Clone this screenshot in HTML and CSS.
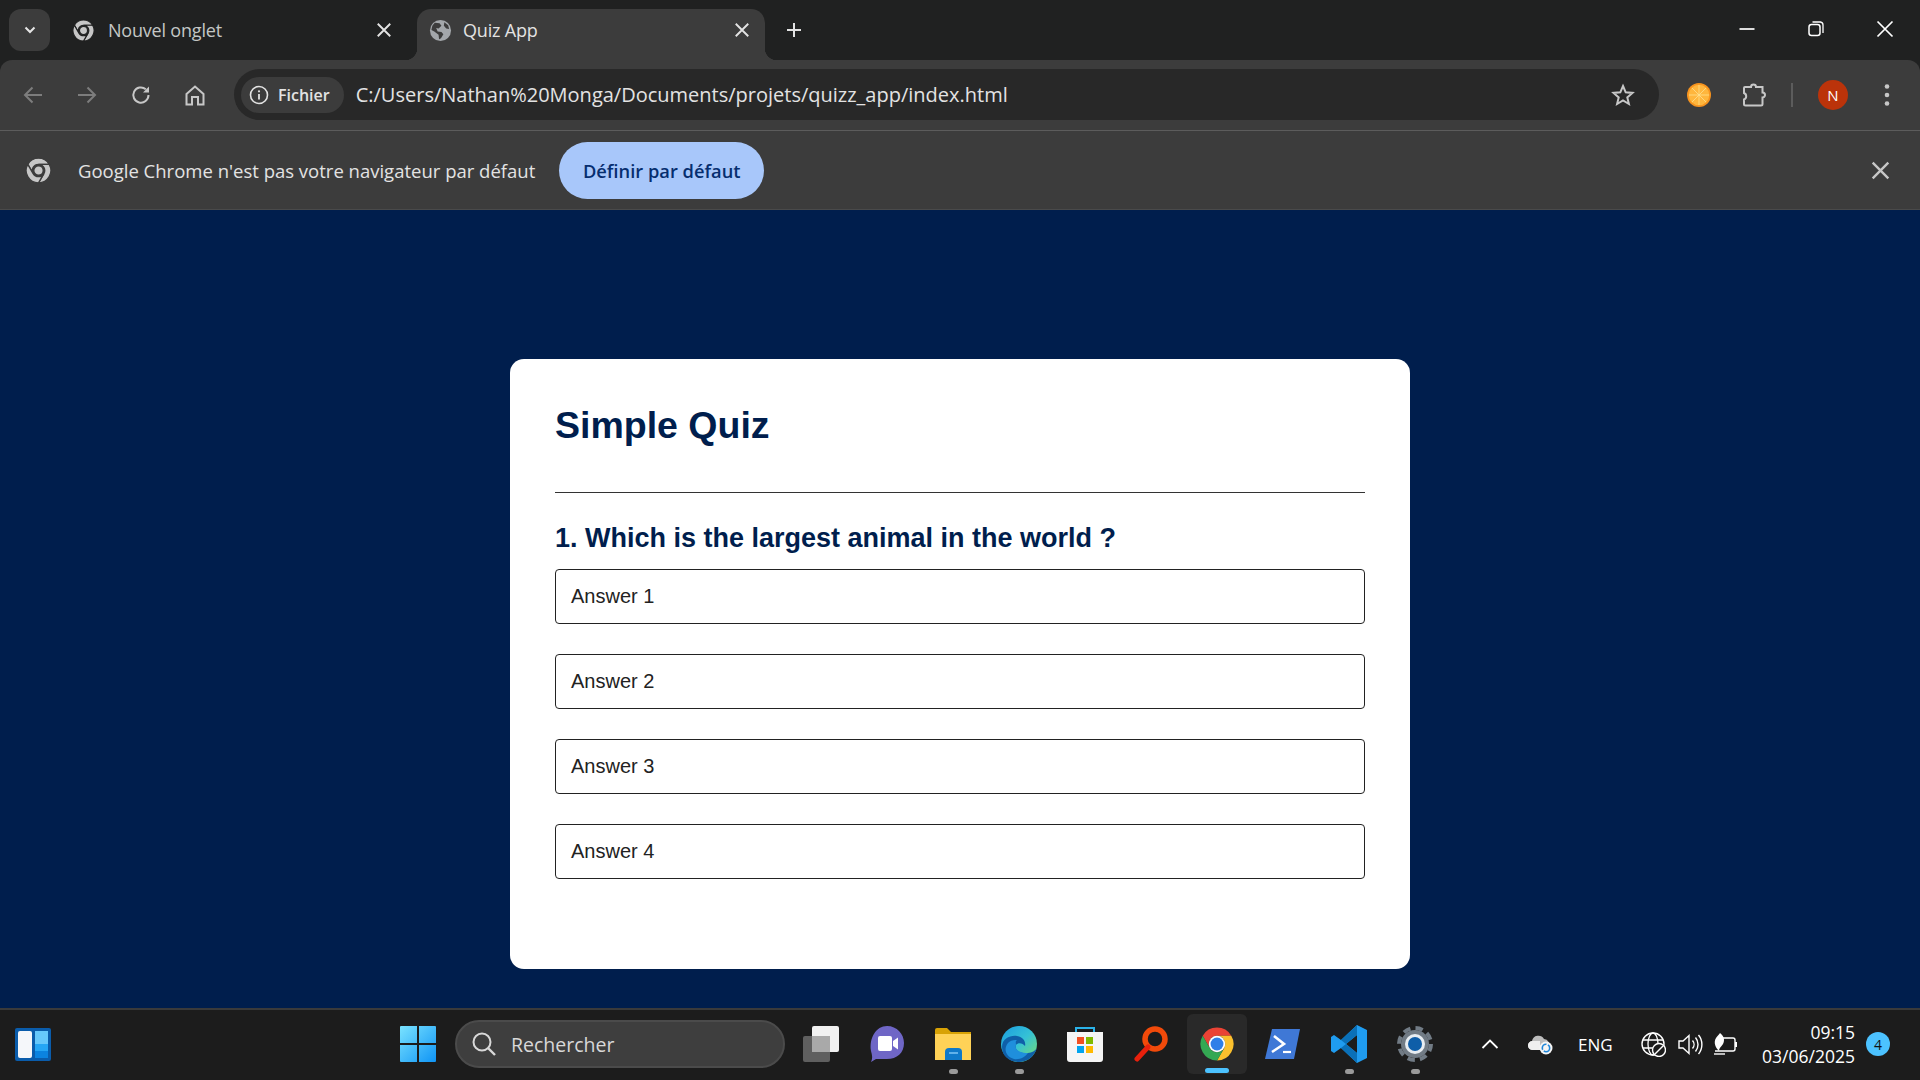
FILE: index.html
```html
<!DOCTYPE html>
<html lang="en">
<head>
  <meta charset="UTF-8">
  <title>Quiz App</title>
  <link rel="stylesheet" href="styles.css">
</head>
<body>
  <svg class="defs" width="0" height="0">
    <symbol id="chrome-grey" viewBox="0 0 24 24">
      <path d="M12 1A11 11 0 0 1 21.53 6.5H12A5.5 5.5 0 0 0 7.24 14.75L2.47 6.5A11 11 0 0 1 12 1Z"/>
      <path d="M21.53 6.5A11 11 0 0 1 12 23L16.76 14.75A5.5 5.5 0 0 0 12 6.5Z"/>
      <path d="M2.47 6.5A11 11 0 0 0 12 23L16.76 14.75A5.5 5.5 0 0 1 7.24 14.75Z"/>
      <circle cx="12" cy="12" r="4.2"/>
    </symbol>
    <symbol id="x-mark" viewBox="0 0 16 16">
      <path d="M3 3L13 13M13 3L3 13" fill="none" stroke="currentColor" stroke-width="1.5"/>
    </symbol>
  </svg>

  <div class="tabstrip">
    <button class="tab-list">
      <svg width="14" height="14" viewBox="0 0 14 14"><path d="M2.5 4.5L7 9L11.5 4.5" fill="none" stroke="#e6e6e6" stroke-width="2"/></svg>
    </button>
    <div class="tab">
      <svg class="tab-icon grey-logo on-dark"><use href="#chrome-grey"/></svg>
      <span class="tab-title">Nouvel onglet</span>
      <svg class="tab-close"><use href="#x-mark"/></svg>
    </div>
    <div class="tab tab-active">
      <svg class="tab-icon" viewBox="0 0 24 24">
        <circle cx="12" cy="12" r="11" fill="#a3a7ab"/>
        <path d="M6 4L11 4.5L13 7L10 10L7.5 9.5L9 13L13 13.5L15 16L12.5 20L10.500 21L10 16.500L5.500 13L2.500 11.500L3.500 7ZM16 3.500L20 6.500L21 10.500L18 10L15.500 7Z" fill="#3c3c3c"/>
      </svg>
      <span class="tab-title">Quiz App</span>
      <svg class="tab-close"><use href="#x-mark"/></svg>
    </div>
    <svg class="new-tab" width="18" height="18" viewBox="0 0 18 18"><path d="M9 2V16M2 9H16" stroke="#e3e3e3" stroke-width="2"/></svg>
    <div class="window-controls">
      <svg width="18" height="18" viewBox="0 0 18 18"><path d="M1.500 9H16.500" stroke="#fff" stroke-width="1.700"/></svg>
      <svg width="18" height="18" viewBox="0 0 18 18"><rect x="2" y="4.500" width="11" height="11" rx="2.500" fill="none" stroke="#fff" stroke-width="1.500"/><path d="M5.500 2H13.500A3 3 0 0 1 16 5V13" fill="none" stroke="#fff" stroke-width="1.300"/></svg>
      <svg width="18" height="18" viewBox="0 0 18 18"><path d="M1.500 1.500L16.500 16.500M16.500 1.500L1.500 16.500" stroke="#fff" stroke-width="1.700"/></svg>
    </div>
  </div>

  <div class="toolbar">
    <div class="nav-btn">
      <svg width="22" height="22" viewBox="0 0 22 22"><path d="M20 11H3M10.500 3.500L3 11L10.500 18.500" fill="none" stroke="#7d7d7d" stroke-width="2"/></svg>
    </div>
    <div class="nav-btn">
      <svg width="22" height="22" viewBox="0 0 22 22"><path d="M2 11H19M11.500 3.500L19 11L11.500 18.500" fill="none" stroke="#7d7d7d" stroke-width="2"/></svg>
    </div>
    <div class="nav-btn">
      <svg width="22" height="22" viewBox="0 0 22 22"><path d="M18.500 11A7.600 7.600 0 1 1 15.800 5.200" fill="none" stroke="#c7c7c7" stroke-width="2"/><path d="M19 2.500V8.500H13Z" fill="#c7c7c7"/></svg>
    </div>
    <div class="nav-btn">
      <svg width="22" height="22" viewBox="0 0 22 22"><path d="M2.500 10L11 2.500L19.500 10V20.500H14V13H8V20.500H2.500Z" fill="none" stroke="#c7c7c7" stroke-width="2"/></svg>
    </div>
    <div class="omnibox">
      <div class="site-chip">
        <svg width="20" height="20" viewBox="0 0 20 20"><circle cx="10" cy="10" r="8.500" fill="none" stroke="#e3e3e3" stroke-width="1.600"/><path d="M10 9V14.500" stroke="#e3e3e3" stroke-width="1.800"/><circle cx="10" cy="6.300" r="1.100" fill="#e3e3e3"/></svg>
        <span>Fichier</span>
      </div>
      <span class="url">C:/Users/Nathan%20Monga/Documents/projets/quizz_app/index.html</span>
      <svg class="star" width="24" height="24" viewBox="0 0 24 24"><path d="M12 3L14.700 9.300L21.500 9.900L16.300 14.400L17.900 21L12 17.500L6.100 21L7.700 14.400L2.500 9.900L9.300 9.300Z" fill="none" stroke="#c7c7c7" stroke-width="2"/></svg>
    </div>
    <div class="toolbar-end">
      <svg class="orange" width="24" height="24" viewBox="0 0 24 24">
        <circle cx="12" cy="12" r="12" fill="#f7931e"/>
        <circle cx="12" cy="12" r="10.300" fill="#ffb63d"/>
        <path d="M12 2V22M2 12H22M5 5L19 19M19 5L5 19" stroke="#ffdf8e" stroke-width=".8"/>
      </svg>
      <svg class="puzzle" width="24" height="26" viewBox="0 0 24 26"><path d="M3 5H9A2.500 2.500 0 0 1 14 5H20.500V10.500A2.500 2.500 0 0 1 20.500 15.500V22A1.500 1.500 0 0 1 19 23.500H3.500A1.500 1.500 0 0 1 2 22V17.500A3.500 3.500 0 0 0 2 11V6A1 1 0 0 1 3 5Z" fill="none" stroke="#c7c7c7" stroke-width="2"/></svg>
      <span class="toolbar-sep"></span>
      <span class="avatar">N</span>
      <svg class="kebab" width="6" height="24" viewBox="0 0 6 24"><circle cx="3" cy="3.500" r="2.300"/><circle cx="3" cy="12" r="2.300"/><circle cx="3" cy="20.500" r="2.300"/></svg>
    </div>
  </div>

  <div class="infobar">
    <svg class="infobar-logo grey-logo on-panel"><use href="#chrome-grey"/></svg>
    <span class="infobar-text">Google Chrome n'est pas votre navigateur par défaut</span>
    <button class="infobar-btn">Définir par défaut</button>
    <svg class="infobar-close"><use href="#x-mark"/></svg>
  </div>

  <main class="page">
    <div class="app">
      <h1>Simple Quiz</h1>
      <div class="quiz">
        <h2>1. Which is the largest animal in the world ?</h2>
        <div class="answers">
          <button class="btn">Answer 1</button>
          <button class="btn">Answer 2</button>
          <button class="btn">Answer 3</button>
          <button class="btn">Answer 4</button>
        </div>
      </div>
    </div>
  </main>

  <footer class="taskbar">
    <svg class="widgets" width="36" height="33" viewBox="0 0 36 33">
      <rect width="36" height="33" rx="2" fill="#0a5cab"/>
      <rect x="3" y="3" width="14" height="27" rx="2" fill="#f5f7fa"/>
      <rect x="20" y="3" width="13" height="13" fill="#66c8fb"/>
      <rect x="20" y="16" width="13" height="7" fill="#25a6f5"/>
      <rect x="20" y="23" width="13" height="7" fill="#0b83e0"/>
    </svg>
    <svg class="start" width="36" height="36" viewBox="0 0 36 36">
      <defs>
        <linearGradient id="win" x1="0" y1="0" x2="1" y2="1"><stop offset="0" stop-color="#7ae3ff"/><stop offset="1" stop-color="#0f94f5"/></linearGradient>
      </defs>
      <path d="M1 0H17V17H0V1A1 1 0 0 1 1 0ZM19 0H35A1 1 0 0 1 36 1V17H19ZM0 19H17V36H1A1 1 0 0 1 0 35ZM19 19H36V35A1 1 0 0 1 35 36H19Z" fill="url(#win)"/>
    </svg>
    <div class="search">
      <svg width="26" height="26" viewBox="0 0 26 26"><circle cx="11" cy="11" r="8.500" fill="none" stroke="#d8d8d8" stroke-width="2"/><path d="M17 17L24 24" stroke="#d8d8d8" stroke-width="2.400"/></svg>
      <span>Rechercher</span>
    </div>
    <div class="task-icons">
      <div class="task-item">
        <svg width="36" height="36" viewBox="0 0 36 36"><rect y="10" width="27" height="26" rx="2" fill="#5f5f5f"/><rect x="9" y="0" width="27" height="26" rx="2" fill="#f1f1f1"/><rect x="9" y="10" width="18" height="16" fill="#a9a9a9"/></svg>
      </div>
      <div class="task-item">
        <svg width="36" height="36" viewBox="0 0 36 36"><path d="M18 0C28 0 35 8 35 17C35 27 28 33 18 33H7L2 36C4 32 3 29 2 25C0 12 7 0 18 0Z" fill="#6f66c6"/><rect x="9" y="10" width="14" height="15" rx="2" fill="#fff"/><path d="M24 15L29 11.500V23.500L24 20Z" fill="#fff"/></svg>
      </div>
      <div class="task-item has-dot">
        <svg width="36" height="36" viewBox="0 0 36 36"><path d="M0 4A2 2 0 0 1 2 2H12L16 6H36V34H0Z" fill="#d8a205"/><path d="M0 8H36V34H0Z" fill="#ffd257"/><path d="M10 34V26A4 4 0 0 1 14 22H23A4 4 0 0 1 27 26V34Z" fill="#0f79c9"/><path d="M14 27H23" stroke="#7cc4f4" stroke-width="1.500"/></svg>
      </div>
      <div class="task-item has-dot">
        <svg width="36" height="36" viewBox="0 0 36 36">
          <defs><linearGradient id="edge" x1="0" y1="0" x2="1" y2="1"><stop offset="0" stop-color="#1a9ce0"/><stop offset=".5" stop-color="#35c1d6"/><stop offset="1" stop-color="#7be06a"/></linearGradient></defs>
          <circle cx="18" cy="18" r="18" fill="url(#edge)"/>
          <path d="M1 21C1 12 10 9 16 10C23 11 25 17 24 20C22 17 17 16 15 19C13 23 18 28 27 27C31 26.500 34 25 36 22C33 31 26 36 18 36C8 36 1 30 1 21Z" fill="#0f5fa8"/>
          <path d="M15 19C13 23 18 27 27 27C24 31 19 34 13 33C5 31 2 23 7 17C9 14.500 13 13.500 16 14C14 15.500 15 17 15 19Z" fill="#1f8fdc"/>
        </svg>
      </div>
      <div class="task-item">
        <svg width="36" height="36" viewBox="0 0 36 36"><path d="M9 7V2H27V7" fill="none" stroke="#2ab2e8" stroke-width="2"/><path d="M0 6H36V33A3 3 0 0 1 33 36H3A3 3 0 0 1 0 33Z" fill="#f5f5f5"/><rect x="10" y="11" width="7" height="7" fill="#f25022"/><rect x="19" y="11" width="7" height="7" fill="#7fba00"/><rect x="10" y="20" width="7" height="7" fill="#00a4ef"/><rect x="19" y="20" width="7" height="7" fill="#ffb900"/></svg>
      </div>
      <div class="task-item">
        <svg width="36" height="36" viewBox="0 0 36 36"><circle cx="22" cy="13" r="10" fill="none" stroke="#f24a0a" stroke-width="5.500"/><path d="M15 21L4 33" stroke="#e8200c" stroke-width="5" stroke-linecap="round"/></svg>
      </div>
      <div class="task-item task-active">
        <svg width="36" height="36" viewBox="0 0 24 24">
          <path d="M12 1A11 11 0 0 1 21.530 6.500H12A5.500 5.500 0 0 0 7.240 14.750L2.470 6.500A11 11 0 0 1 12 1Z" fill="#ea4335"/>
          <path d="M21.530 6.500A11 11 0 0 1 12 23L16.760 14.750A5.500 5.500 0 0 0 12 6.500Z" fill="#fbc02d"/>
          <path d="M2.470 6.500A11 11 0 0 0 12 23L16.760 14.750A5.500 5.500 0 0 1 7.240 14.750Z" fill="#34a853"/>
          <circle cx="12" cy="12" r="5.500" fill="#fff"/>
          <circle cx="12" cy="12" r="4.300" fill="#2f7fe8"/>
        </svg>
      </div>
      <div class="task-item">
        <svg width="36" height="36" viewBox="0 0 36 36"><path d="M7 3H35L29 33H0Z" fill="#3f78d6"/><path d="M9 10L19 18L7 26" fill="none" stroke="#fff" stroke-width="2.600"/><path d="M18 26H26" stroke="#fff" stroke-width="2.200"/></svg>
      </div>
      <div class="task-item has-dot">
        <svg width="36" height="38" viewBox="0 0 36 38"><path d="M26 0L36 5V33L26 38L10 23L3 28L0 26V12L3 10L10 15ZM26 10L15 19L26 28Z" fill="#1f9cf0"/><path d="M26 0V10L15 19L10 15ZM26 38V28L15 19L10 23Z" fill="#0a70b8"/></svg>
      </div>
      <div class="task-item has-dot">
        <svg width="36" height="36" viewBox="0 0 36 36"><circle cx="18" cy="18" r="14" fill="#717b85"/><circle cx="18" cy="18" r="16" fill="none" stroke="#717b85" stroke-width="4" stroke-dasharray="7.400 5.170"/><circle cx="18" cy="18" r="10" fill="#e8edf2"/><circle cx="18" cy="18" r="7" fill="#0f5ea8"/></svg>
      </div>
    </div>
    <div class="tray">
      <svg class="tray-chevron" width="18" height="12" viewBox="0 0 18 12"><path d="M1.500 10L9 2.500L16.500 10" fill="none" stroke="#fff" stroke-width="1.800"/></svg>
      <svg class="tray-cloud" width="26" height="22" viewBox="0 0 26 22"><path d="M5 17A4.500 4.500 0 0 1 4 8A6.500 6.500 0 0 1 16 6A5 5 0 0 1 20 14V17Z" fill="#bdbdbd"/><path d="M5 17A4.500 4.500 0 0 1 4 8H12V17Z" fill="#efefef"/><circle cx="18" cy="15" r="6.500" fill="#f5f5f5"/><circle cx="18" cy="15" r="3.700" fill="none" stroke="#1f86d8" stroke-width="1.600" stroke-dasharray="8 1.500"/></svg>
      <span class="tray-lang">ENG</span>
      <svg class="tray-globe" width="25" height="25" viewBox="0 0 25 25"><circle cx="12" cy="12" r="11" fill="none" stroke="#fff" stroke-width="1.400"/><ellipse cx="12" cy="12" rx="5" ry="11" fill="none" stroke="#fff" stroke-width="1.300"/><path d="M2 8H22M2 16H22" stroke="#fff" stroke-width="1.300"/><circle cx="18" cy="18" r="6.500" fill="#1c1c1c" stroke="#fff" stroke-width="1.400"/><path d="M14 22L22 14" stroke="#fff" stroke-width="1.400"/></svg>
      <svg class="tray-volume" width="25" height="25" viewBox="0 0 25 25"><path d="M1 9H5L11 3.500V21.500L5 16H1Z" fill="none" stroke="#fff" stroke-width="1.400"/><path d="M14.500 8.500A6 6 0 0 1 14.500 16.500M17.500 5.500A11 11 0 0 1 17.500 19.500M20.500 3A15 15 0 0 1 20.500 22" fill="none" stroke="#fff" stroke-width="1.400"/></svg>
      <svg class="tray-battery" width="25" height="25" viewBox="0 0 25 25"><path d="M8 6H20A2 2 0 0 1 22 8V17A2 2 0 0 1 20 19H2" fill="none" stroke="#fff" stroke-width="1.400"/><path d="M23 10V15" stroke="#fff" stroke-width="2"/><path d="M7 1C11 4 12 8 10 12C8 15 6 16 6 19C3 16 0 11 3 6C4 4 6 3 7 1Z" fill="#fff"/><path d="M1 22H12" stroke="#fff" stroke-width="1.400"/></svg>
      <div class="clock">
        <span>09:15</span>
        <span>03/06/2025</span>
      </div>
      <span class="notif">4</span>
    </div>
  </footer>
</body>
</html>
```

FILE: styles.css
```css
* {
  box-sizing: border-box;
}
body {
  margin: 0;
  width: 1920px;
  height: 1080px;
  display: flex;
  flex-direction: column;
  overflow: hidden;
  font-family: 'Open Sans', 'Noto Sans', sans-serif;
  background: #202121;
}
button {
  border: none;
  font-family: inherit;
}
.defs {
  position: absolute;
}

/* tab strip */
.tabstrip {
  height: 60px;
  flex: none;
  display: flex;
  align-items: flex-end;
  background: #202121;
  padding-left: 9px;
}
.tab-list {
  width: 41px;
  height: 42px;
  margin-bottom: 9px;
  padding: 0;
  display: flex;
  align-items: center;
  justify-content: center;
  border-radius: 12px;
  background: #3c3c3c;
}
.tab {
  width: 360px;
  height: 51px;
  margin-left: 8px;
  padding: 0 24px 9px 14px;
  display: flex;
  align-items: center;
  color: #c4c7c5;
}
.tab-icon {
  width: 23px;
  height: 23px;
  flex: none;
}
.tab-title {
  flex: 1;
  margin-left: 13px;
  font-size: 18px;
  letter-spacing: -0.2px;
}
.tab-close {
  width: 20px;
  height: 20px;
  flex: none;
  margin-bottom: 1px;
  color: #e3e3e3;
}
.tab-active {
  position: relative;
  width: 348px;
  margin-left: -1px;
  padding: 0 13px 9px 12px;
  background: #3c3c3c;
  border-radius: 14px 14px 0 0;
  color: #e3e3e3;
}
.tab-active .tab-title {
  margin-left: 11px;
}
.tab-active::before,
.tab-active::after {
  content: "";
  position: absolute;
  bottom: 0;
  width: 12px;
  height: 12px;
}
.tab-active::before {
  left: -12px;
  background: radial-gradient(circle at 0 0, transparent 12px, #3c3c3c 12.500px);
}
.tab-active::after {
  right: -12px;
  background: radial-gradient(circle at 100% 0, transparent 12px, #3c3c3c 12.500px);
}
.new-tab {
  margin: 0 0 21px 20px;
}
.window-controls {
  margin-left: auto;
  height: 60px;
  padding: 0 26px 2px 0;
  display: flex;
  align-items: center;
  gap: 51px;
}
.grey-logo {
  fill: #c7c7c7;
}
.on-dark {
  stroke: #202121;
  stroke-width: 1.200;
}
.on-panel {
  stroke: #3c3c3c;
  stroke-width: 1.200;
}

/* toolbar */
.toolbar {
  height: 71px;
  flex: none;
  display: flex;
  align-items: center;
  padding: 0 0 1px 6px;
  background: #3c3c3c;
  border-bottom: 1px solid #5c5c5c;
  border-radius: 12px 12px 0 0;
}
.nav-btn {
  width: 54px;
  display: flex;
  justify-content: center;
}
.omnibox {
  width: 1425px;
  height: 51px;
  margin-left: 12px;
  padding: 0 24px 0 7px;
  display: flex;
  align-items: center;
  background: #282828;
  border-radius: 26px;
}
.site-chip {
  height: 36px;
  padding: 0 14px 0 8px;
  display: flex;
  align-items: center;
  gap: 9px;
  background: #3c3c3c;
  border-radius: 18px;
  color: #e3e3e3;
  font-size: 16px;
  font-weight: 600;
}
.url {
  flex: 1;
  margin-left: 12px;
  color: #e3e3e3;
  font-size: 20px;
}
.toolbar-end {
  display: flex;
  align-items: center;
}
.orange {
  margin-left: 28px;
}
.puzzle {
  margin-left: 31px;
}
.toolbar-sep {
  width: 2px;
  height: 24px;
  margin-left: 25px;
  background: #5c5c5c;
}
.avatar {
  width: 30px;
  height: 30px;
  margin-left: 25px;
  display: flex;
  align-items: center;
  justify-content: center;
  border-radius: 50%;
  background: #bb330a;
  color: #fff;
  font-size: 15px;
}
.kebab {
  margin-left: 36px;
  fill: #c7c7c7;
}

/* infobar */
.infobar {
  height: 79px;
  flex: none;
  display: flex;
  align-items: center;
  padding: 0 27px 0 25px;
  background: #3c3c3c;
  border-bottom: 1px solid #4a4a4a;
}
.infobar-logo {
  width: 27px;
  height: 27px;
}
.infobar-text {
  margin-left: 26px;
  color: #e3e3e3;
  font-size: 18.500px;
}
.infobar-btn {
  width: 205px;
  height: 57px;
  margin-left: 24px;
  padding: 0;
  border-radius: 29px;
  background: #a8c7fa;
  color: #062e6f;
  font-size: 18.300px;
  font-weight: 600;
}
.infobar-close {
  width: 25px;
  height: 25px;
  margin-left: auto;
  color: #c7c7c7;
}

/* quiz page */
.page {
  flex: 1;
  display: flex;
  justify-content: center;
  padding-top: 149px;
  background: #001e4d;
  font-family: 'Liberation Sans', Arial, sans-serif;
}
.app {
  width: 900px;
  height: 610px;
  padding: 45px;
  background: #fff;
  border-radius: 14px;
}
.app h1 {
  margin: 0;
  padding-bottom: 46px;
  border-bottom: 1px solid #333;
  color: #001e4d;
  font-size: 37.500px;
  font-weight: bold;
  line-height: 42px;
}
.quiz {
  padding-top: 29px;
}
.quiz h2 {
  margin: 0;
  color: #001e4d;
  font-size: 27px;
  font-weight: bold;
  line-height: 32px;
}
.answers {
  margin-top: 15px;
  display: flex;
  flex-direction: column;
  gap: 30px;
}
.btn {
  height: 55px;
  padding: 0 15px;
  background: #fff;
  border: 1px solid #222;
  border-radius: 4px;
  color: #222;
  font-family: inherit;
  font-size: 20px;
  text-align: left;
}

/* windows taskbar */
.taskbar {
  height: 72px;
  flex: none;
  display: flex;
  align-items: center;
  padding: 0 0 2px 15px;
  background: #1c1c1c;
  border-top: 2px solid #3a3a3a;
}
.widgets {
  margin-right: 349px;
}
.search {
  width: 330px;
  height: 48px;
  margin-left: 19px;
  padding-left: 14px;
  display: flex;
  align-items: center;
  gap: 14px;
  background: #3e3e3e;
  border: 2px solid #4b4b4b;
  border-radius: 24px;
  color: #d8d8d8;
  font-size: 19.500px;
}
.task-icons {
  margin-left: 3px;
  display: flex;
}
.task-item {
  position: relative;
  width: 66px;
  height: 60px;
  display: flex;
  align-items: center;
  justify-content: center;
}
.has-dot::after {
  content: "";
  position: absolute;
  left: 29px;
  bottom: 0;
  width: 9px;
  height: 5px;
  border-radius: 3px;
  background: #9a9a9a;
}
.task-active {
  width: 60px;
  margin: 0 3px;
  background: #292929;
  border-radius: 6px;
}
.task-active::after {
  content: "";
  position: absolute;
  left: 18px;
  bottom: 1px;
  width: 24px;
  height: 5px;
  border-radius: 3px;
  background: #4cc2ff;
}
.tray {
  flex: 1;
  display: flex;
  align-items: center;
  padding-left: 33px;
  color: #fff;
}
.tray-cloud {
  margin-left: 29px;
}
.tray-lang {
  margin-left: 24px;
  font-size: 17px;
}
.tray-globe {
  margin-left: 28px;
}
.tray-volume {
  margin-left: 12px;
}
.tray-battery {
  margin-left: 10px;
}
.clock {
  margin-left: auto;
  display: flex;
  flex-direction: column;
  align-items: flex-end;
  font-size: 17.500px;
  line-height: 24px;
}
.notif {
  width: 24px;
  height: 24px;
  margin: 0 30px 0 11px;
  display: flex;
  align-items: center;
  justify-content: center;
  border-radius: 50%;
  background: #4cc2ff;
  color: #111;
  font-size: 14px;
}
```
